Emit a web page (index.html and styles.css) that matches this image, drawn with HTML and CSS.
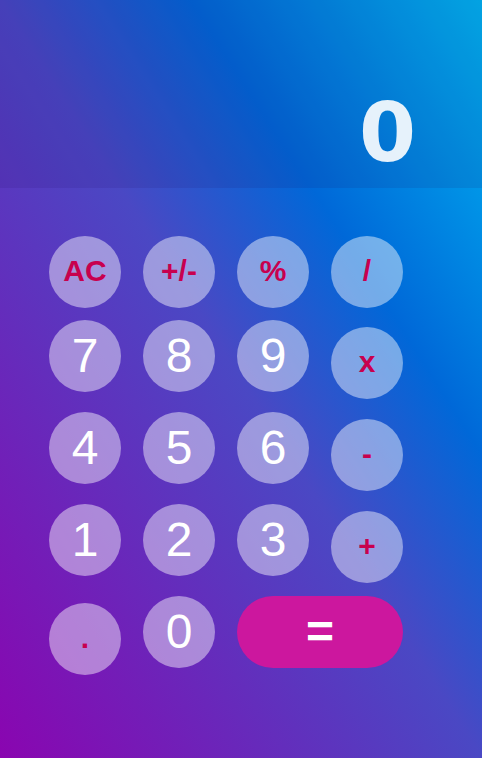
FILE: index.html
```html
<!DOCTYPE html>
<html lang="en">
<head>
<meta charset="utf-8">
<title>Calculator</title>
<link rel="stylesheet" href="styles.css">
</head>
<body>
<div class="calc">
  <div class="display"><span class="value">0</span></div>
  <div class="keypad">
    <div class="row row-top">
      <div class="key op">AC</div>
      <div class="key op">+/-</div>
      <div class="key op">%</div>
      <div class="key op">/</div>
    </div>
    <div class="row">
      <div class="key num">7</div>
      <div class="key num">8</div>
      <div class="key num">9</div>
      <div class="key op">x</div>
    </div>
    <div class="row">
      <div class="key num">4</div>
      <div class="key num">5</div>
      <div class="key num">6</div>
      <div class="key op">-</div>
    </div>
    <div class="row">
      <div class="key num">1</div>
      <div class="key num">2</div>
      <div class="key num">3</div>
      <div class="key op">+</div>
    </div>
    <div class="row">
      <div class="key op">.</div>
      <div class="key num">0</div>
      <div class="key equals">=</div>
    </div>
  </div>
</div>
</body>
</html>
```
FILE: styles.css
```css
html, body {
  margin: 0;
  padding: 0;
  height: 100%;
}
body {
  background: linear-gradient(to top right, #8a05b0 0%, #4a48c4 50%, #0068d8 70%, #00b6f2 100%);
  font-family: "Liberation Sans", Arial, sans-serif;
  overflow: hidden;
}
.calc {
  width: 482px;
  height: 758px;
}
.display {
  height: 188px;
  box-sizing: border-box;
  display: flex;
  justify-content: flex-end;
  align-items: flex-end;
  padding: 0 66px 14px 0;
  background: rgba(30, 0, 90, 0.1);
}
.value {
  font-family: "DejaVu Sans", Verdana, sans-serif;
  font-weight: bold;
  font-size: 82px;
  line-height: 82px;
  color: rgba(255, 255, 255, 0.9);
}
.keypad {
  padding: 48px 0 0 49px;
  display: flex;
  flex-direction: column;
  gap: 13px;
}
.row {
  display: flex;
  align-items: baseline;
  gap: 22px;
}
.row-top {
  margin-bottom: -1px;
}
.key {
  width: 72px;
  height: 72px;
  line-height: 72px;
  border-radius: 50%;
  background: rgba(255, 255, 255, 0.45);
  text-align: center;
  flex: none;
}
.num {
  font-size: 48px;
  color: #ffffff;
}
.op {
  font-size: 30px;
  line-height: 70px;
  font-weight: bold;
  color: #c8004e;
}
.equals {
  width: 166px;
  border-radius: 36px;
  background: #cc179e;
  color: #ffffff;
  font-size: 48px;
  font-weight: bold;
}
```
